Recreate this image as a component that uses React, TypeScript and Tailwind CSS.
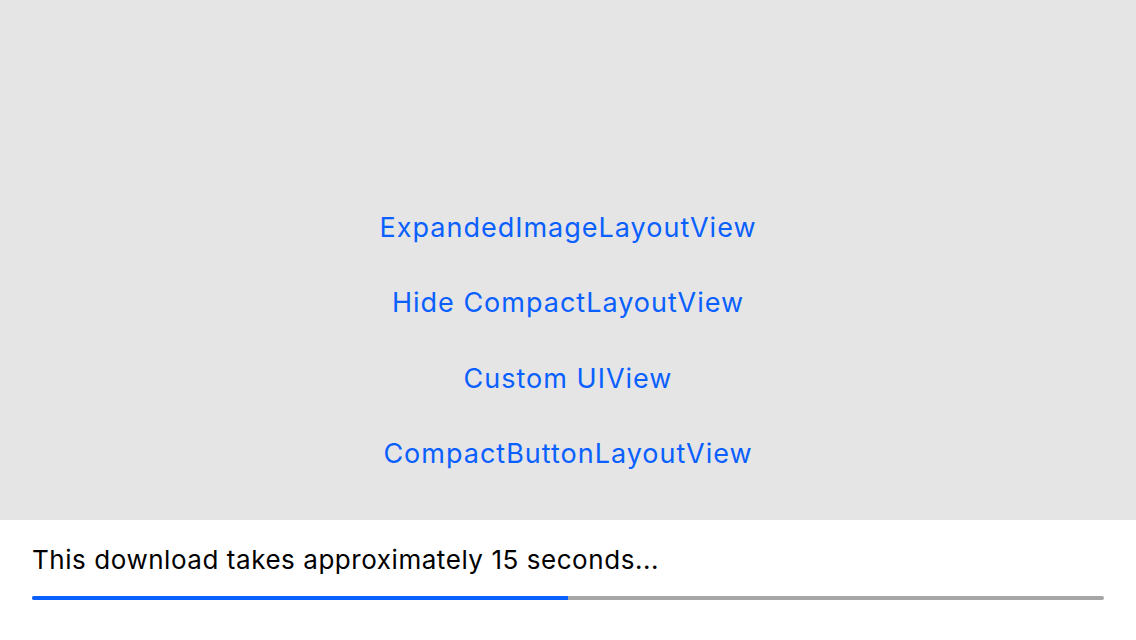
import React from "react";

export default function App() {
  const items = [
    "ExpandedImageLayoutView",
    "Hide CompactLayoutView",
    "Custom UIView",
    "CompactButtonLayoutView",
  ];
  return (
    <div
      className="w-[1136px] h-[640px] flex flex-col overflow-hidden"
      style={{ fontFamily: "Inter, 'Noto Sans', sans-serif" }}
    >
      <div className="h-[520px] bg-[#e5e5e5] flex flex-col items-center pt-[190px]">
        {items.map((t) => (
          <div
            key={t}
            className="h-[75.5px] flex items-center text-[27px] text-[#0a60ff] tracking-[1px]"
          >
            {t}
          </div>
        ))}
      </div>
      <div className="flex-1 bg-white px-[32px] pt-[22px]">
        <div className="text-[26px] text-black leading-[36px] tracking-[0.55px]">
          This download takes approximately 15 seconds...
        </div>
        <div className="mt-[18px] h-[4px] w-[1072px] bg-[#a6a6a6] rounded-full flex overflow-hidden">
          <div className="h-full w-[536px] bg-[#0a60ff]" />
        </div>
      </div>
    </div>
  );
}
